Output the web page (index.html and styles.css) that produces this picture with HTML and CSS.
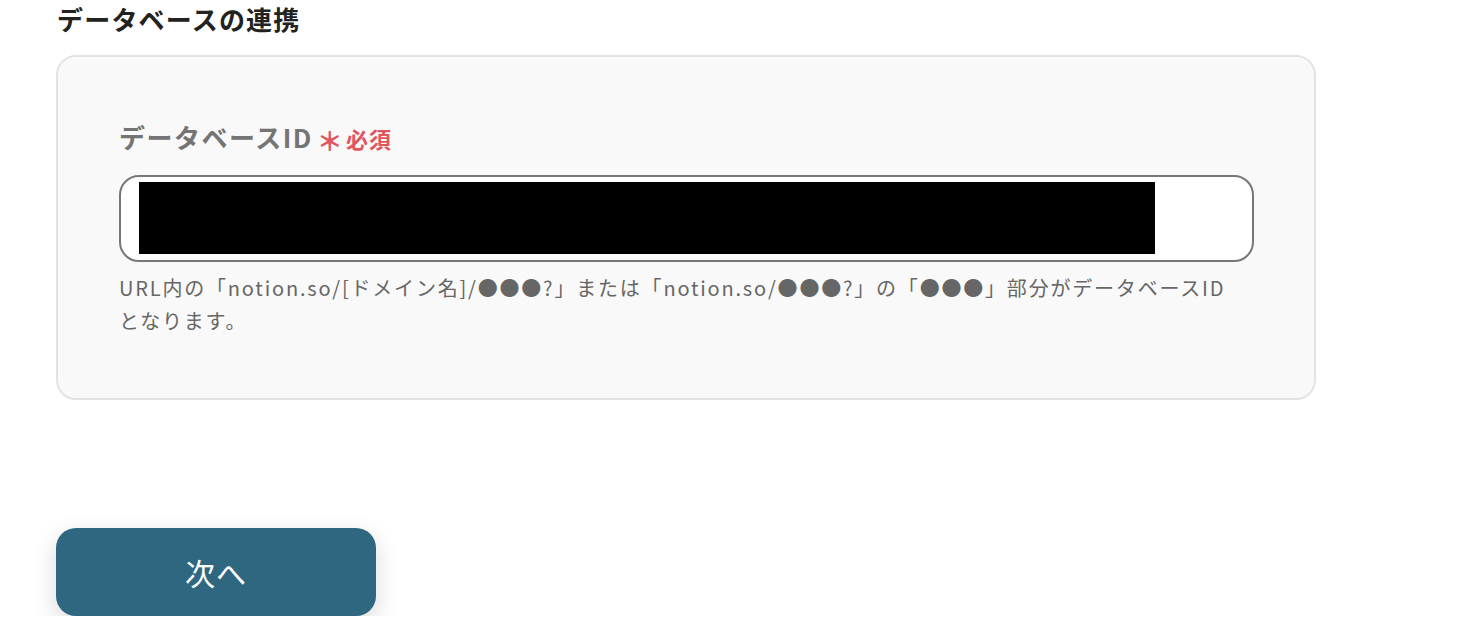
FILE: index.html
```html
<!DOCTYPE html>
<html lang="ja">
  <head>
    <meta charset="UTF-8" />
    <meta name="viewport" content="width=device-width, initial-scale=1.0" />
    <title>データベースの連携</title>
    <link rel="stylesheet" href="styles.css">
  </head>
  <body>
    <main class="page">
      <!-- セクション見出し -->
      <h2 class="section-title">データベースの連携</h2>

      <!-- 入力カード -->
      <section class="form-card">
        <div class="field">
          <label class="field-label" for="database-id">
            データベースID<span class="required"><span class="mark">＊</span>必須</span>
          </label>
          <div class="input-box">
            <div class="masked"></div>
          </div>
          <p class="field-help">URL内の「notion.so/[ドメイン名]/●●●?」または「notion.so/●●●?」の「●●●」部分がデータベースIDとなります。</p>
        </div>
      </section>

      <!-- 操作ボタン -->
      <div class="actions">
        <button class="next-btn">次へ</button>
      </div>
    </main>
  </body>
</html>
```

FILE: styles.css
```css
body {
  margin: 0;
  background-color: #fff;
  font-family: "Noto Sans CJK JP", "Noto Sans", sans-serif;
  color: #222;
}

.page {
  padding: 0 0 0 56px;
  width: 1260px;
}

.section-title {
  margin: 0;
  padding: 2px 0 0 1px;
  font-size: 26px;
  line-height: 34px;
  font-weight: 700;
  letter-spacing: 1.2px;
  color: #222;
}

.form-card {
  margin-top: 19px;
  border: 2px solid #e1e4e7;
  border-radius: 20px;
  background-color: #f9f9f9;
  padding: 63px 60px 61px 61px;
}

.field {
  display: flex;
  flex-direction: column;
}

.field-label {
  display: flex;
  align-items: baseline;
  font-size: 26px;
  line-height: 34px;
  font-weight: 700;
  letter-spacing: 1.5px;
  color: #747474;
}

.required {
  display: inline-flex;
  align-items: baseline;
  margin-left: 4px;
  font-size: 22px;
  letter-spacing: 1px;
  color: #e2555f;
}

.required .mark {
  font-size: 26px;
  margin-right: 2px;
  position: relative;
  top: 3px;
}

.input-box {
  margin-top: 20px;
  border: 2px solid #777;
  border-radius: 20px;
  background-color: #fff;
  padding: 5px 0 5px 18px;
  box-sizing: border-box;
  height: 87px;
}

.masked {
  width: 1016px;
  height: 72px;
  background-color: #000;
}

.field-help {
  margin: 9px 0 0;
  font-size: 20px;
  line-height: 33px;
  letter-spacing: 1.8px;
  color: #666;
  max-width: 1112px;
}

.actions {
  margin-top: 128px;
}

.next-btn {
  width: 320px;
  height: 88px;
  border: none;
  border-radius: 20px;
  background-color: #2f6780;
  color: #fff;
  font-family: inherit;
  font-size: 30px;
  letter-spacing: 1px;
  cursor: pointer;
  box-shadow: 0 8px 24px rgba(0, 0, 0, 0.15);
}
```
